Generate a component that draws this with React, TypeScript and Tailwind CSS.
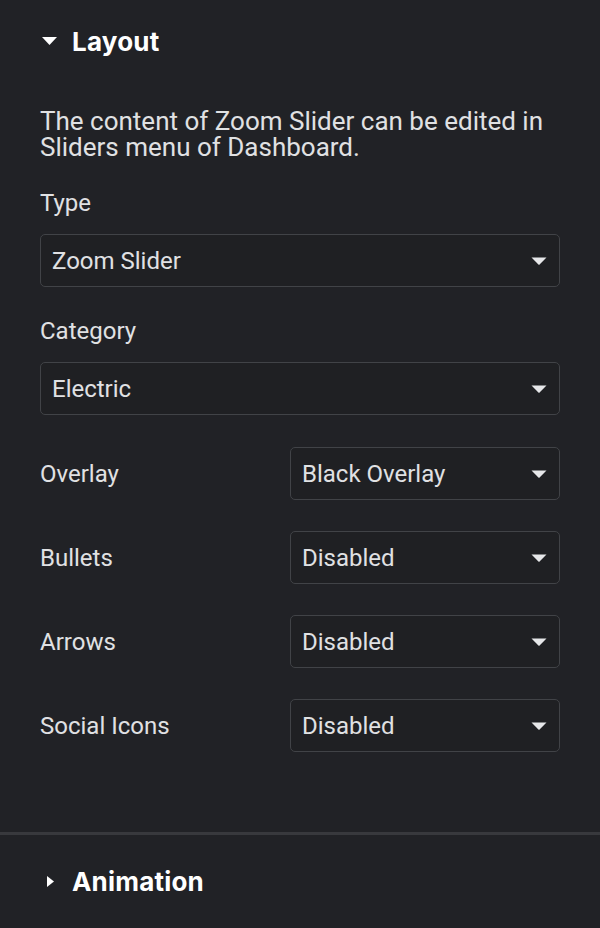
import React from "react";

const FIELDS_FULL = [
  { label: "Type", value: "Zoom Slider" },
  { label: "Category", value: "Electric" },
];

const FIELDS_INLINE = [
  { label: "Overlay", value: "Black Overlay" },
  { label: "Bullets", value: "Disabled" },
  { label: "Arrows", value: "Disabled" },
  { label: "Social Icons", value: "Disabled" },
];

function Caret() {
  return (
    <svg viewBox="0 0 16 8" className="w-4 h-2 shrink-0" fill="#e6e7e9">
      <path d="M0.5 0.5h15L8.6 7.4a0.9 0.9 0 0 1-1.2 0Z" />
    </svg>
  );
}

function Select({ value, className = "" }: { value: string; className?: string }) {
  return (
    <div
      className={`h-[53px] flex items-center justify-between pl-[11px] pr-[12px] rounded-[5px] border-[1.5px] border-[#414347] bg-[#1f2023] text-[#e0e1e3] ${className}`}
    >
      <span>{value}</span>
      <Caret />
    </div>
  );
}

function SectionHeader({ title, open }: { title: string; open: boolean }) {
  return (
    <div className="flex items-center font-['Inter'] font-bold text-[26px] tracking-[0.2px] text-white">
      <div className="w-[32px] flex">
        {open ? (
          <svg viewBox="0 0 15 8" className="ml-[2px] w-[15px] h-2" fill="#fff">
            <path d="M0 0h15L7.5 8Z" />
          </svg>
        ) : (
          <svg viewBox="0 0 7 11" className="ml-[7px] w-[7px] h-[11px]" fill="#fff">
            <path d="M0 0l7 5.5L0 11Z" />
          </svg>
        )}
      </div>
      <span>{title}</span>
    </div>
  );
}

export default function App() {
  return (
    <div className="w-[600px] h-[928px] flex flex-col bg-[#212226] font-['Roboto',sans-serif] text-[24px] text-[#e0e1e3]">
      <section className="px-10 pb-[80px]">
        <div className="h-[82px] flex items-center">
          <SectionHeader title="Layout" open />
        </div>
        <p className="mt-[26px] text-[26px] leading-[26px]">
          The content of Zoom Slider can be edited in Sliders menu of Dashboard.
        </p>
        {FIELDS_FULL.map((f, i) => (
          <div key={f.label} className={i === 0 ? "mt-[30px]" : "mt-[31px]"}>
            <div className="leading-[26px]">{f.label}</div>
            <Select value={f.value} className="mt-[18px]" />
          </div>
        ))}
        <div className="mt-[32px] flex flex-col gap-[31px]">
          {FIELDS_INLINE.map((f) => (
            <div key={f.label} className="flex items-center justify-between">
              <span>{f.label}</span>
              <Select value={f.value} className="w-[270px]" />
            </div>
          ))}
        </div>
      </section>
      <div className="h-[3px] bg-[#38393d]" />
      <section className="flex-1 flex items-center px-10">
        <SectionHeader title="Animation" open={false} />
      </section>
    </div>
  );
}
